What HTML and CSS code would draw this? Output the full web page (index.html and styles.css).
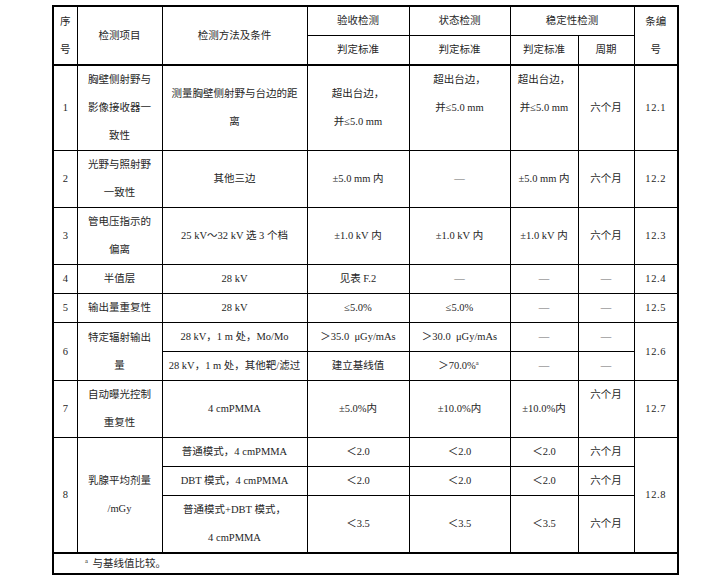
FILE: index.html
```html
<!DOCTYPE html>
<html lang="zh-CN">
<head>
<meta charset="utf-8">
<title>检测项目与要求</title>
<link rel="stylesheet" href="styles.css">
</head>
<body>
<div class="page">
<table class="spec">
<colgroup>
<col class="c-no"><col class="c-item"><col class="c-method"><col class="c-acc"><col class="c-state"><col class="c-stab"><col class="c-cycle"><col class="c-ref">
</colgroup>
<thead>
<tr>
<th rowspan="2">序<br>号</th>
<th rowspan="2">检测项目</th>
<th rowspan="2">检测方法及条件</th>
<th>验收检测</th>
<th>状态检测</th>
<th colspan="2">稳定性检测</th>
<th rowspan="2">条编<br>号</th>
</tr>
<tr>
<th>判定标准</th>
<th>判定标准</th>
<th>判定标准</th>
<th>周期</th>
</tr>
</thead>
<tbody>
<tr class="first">
<td>1</td>
<td>胸壁侧射野与<br>影像接收器一<br>致性</td>
<td>测量胸壁侧射野与台边的距<br>离</td>
<td>超出台边，<br>并≤5.0 mm</td>
<td class="top">超出台边，<br>并≤5.0 mm</td>
<td class="top">超出台边，<br>并≤5.0 mm</td>
<td>六个月</td>
<td class="num">12.1</td>
</tr>
<tr>
<td>2</td>
<td>光野与照射野<br>一致性</td>
<td>其他三边</td>
<td>±5.0 mm 内</td>
<td class="dash">—</td>
<td>±5.0 mm 内</td>
<td>六个月</td>
<td class="num">12.2</td>
</tr>
<tr>
<td>3</td>
<td>管电压指示的<br>偏离</td>
<td>25 kV～32 kV 选 3 个档</td>
<td>±1.0 kV 内</td>
<td>±1.0 kV 内</td>
<td>±1.0 kV 内</td>
<td>六个月</td>
<td class="num">12.3</td>
</tr>
<tr>
<td>4</td>
<td>半值层</td>
<td>28 kV</td>
<td>见表 F.2</td>
<td class="dash">—</td>
<td class="dash">—</td>
<td class="dash">—</td>
<td class="num">12.4</td>
</tr>
<tr>
<td>5</td>
<td>输出量重复性</td>
<td>28 kV</td>
<td>≤5.0%</td>
<td>≤5.0%</td>
<td class="dash">—</td>
<td class="dash">—</td>
<td class="num">12.5</td>
</tr>
<tr>
<td rowspan="2">6</td>
<td rowspan="2">特定辐射输出<br>量</td>
<td>28 kV，1 m 处，Mo/Mo</td>
<td>＞35.0&nbsp; μGy/mAs</td>
<td>＞30.0&nbsp; μGy/mAs</td>
<td class="dash">—</td>
<td class="dash">—</td>
<td rowspan="2" class="num">12.6</td>
</tr>
<tr>
<td>28 kV，1 m 处，其他靶/滤过</td>
<td>建立基线值</td>
<td>＞70.0%<span class="sup">a</span></td>
<td class="dash">—</td>
<td class="dash">—</td>
</tr>
<tr>
<td>7</td>
<td>自动曝光控制<br>重复性</td>
<td>4 cmPMMA</td>
<td>±5.0%内</td>
<td>±10.0%内</td>
<td>±10.0%内</td>
<td class="top">六个月</td>
<td class="num">12.7</td>
</tr>
<tr>
<td rowspan="3">8</td>
<td rowspan="3">乳腺平均剂量<br>/mGy</td>
<td>普通模式，4 cmPMMA</td>
<td>＜2.0</td>
<td>＜2.0</td>
<td>＜2.0</td>
<td>六个月</td>
<td rowspan="3" class="num">12.8</td>
</tr>
<tr>
<td>DBT 模式，4 cmPMMA</td>
<td>＜2.0</td>
<td>＜2.0</td>
<td>＜2.0</td>
<td>六个月</td>
</tr>
<tr>
<td>普通模式+DBT 模式，<br>4 cmPMMA</td>
<td>＜3.5</td>
<td>＜3.5</td>
<td>＜3.5</td>
<td>六个月</td>
</tr>
</tbody>
<tfoot>
<tr>
<td colspan="8" class="note"><span class="sup">a</span> 与基线值比较。</td>
</tr>
</tfoot>
</table>
</div>
</body>
</html>
```
FILE: styles.css
```css
html, body {
  margin: 0;
  padding: 0;
  background: #ffffff;
}

.page {
  padding: 5px 0 0 52px;
}

.spec {
  border-collapse: collapse;
  table-layout: fixed;
  width: 626px;
  border: 2px solid #000000;
  font-family: "Liberation Serif", "Noto Sans CJK SC", serif;
  font-size: 10.5px;
  color: #262626;
}

.c-no { width: 24px; }
.c-item { width: 85px; }
.c-method { width: 145px; }
.c-acc { width: 102px; }
.c-state { width: 101px; }
.c-stab { width: 68px; }
.c-cycle { width: 56px; }
.c-ref { width: 44px; }

.spec th,
.spec td {
  border: 1px solid #000000;
  padding: 0;
  line-height: 28px;
  text-align: center;
  vertical-align: middle;
  font-weight: normal;
  white-space: nowrap;
}

.spec tbody tr.first td {
  border-top: 2px solid #000000;
}

.spec td.top {
  vertical-align: top;
}

.spec td.dash {
  color: #6a6a6a;
}

.spec td.num {
  letter-spacing: 0.6px;
}

.spec tfoot td {
  border-top: 2px solid #000000;
}

.spec td.note {
  text-align: left;
  padding-left: 31px;
  line-height: 19px;
}

.sup {
  font-size: 6.5px;
  vertical-align: super;
  line-height: 0;
  margin-right: 2px;
}
```
